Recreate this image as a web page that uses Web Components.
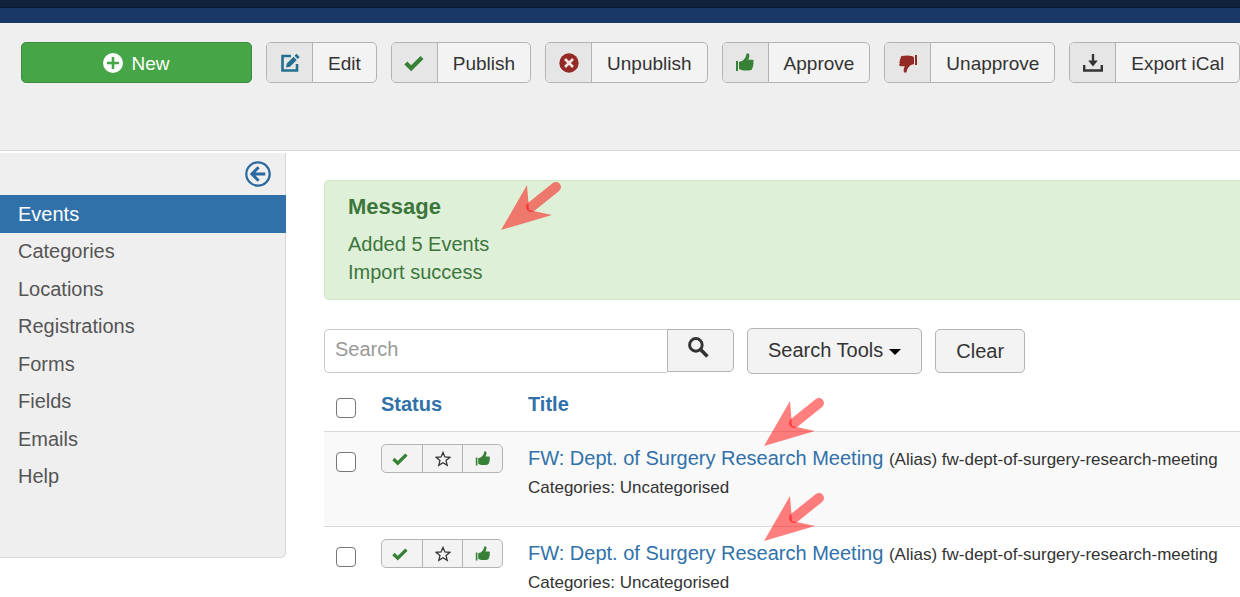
<!DOCTYPE html>
<html lang="en">
<head>
<meta charset="utf-8">
<meta name="viewport" content="width=device-width, initial-scale=1">
<title>Events</title>
<style>
  html, body { margin: 0; background: #fff; }
  body { font-family: "Liberation Sans", Arial, sans-serif; font-size: 20px; line-height: 28px; color: #333; }
</style>
</head>
<body>
<events-app></events-app>

<script>
const define = (name, html, setup) => {
  const template = document.createElement('template');
  template.innerHTML = html;
  customElements.define(name, class extends HTMLElement {
    constructor() {
      super();
      this.attachShadow({ mode: 'open' }).append(template.content.cloneNode(true));
    }
    connectedCallback() {
      if (setup && !this.ready) { this.ready = true; setup(this, this.shadowRoot); }
    }
  });
};

const THUMB = '<path fill="currentColor" d="M1 8h2v10H1zM4 9l3.600-1.200C9.500 6 10.500 4.500 11 3c.3-1.200.3-2.400 1.400-2.700 1.600-.2 2.200 1.500 1.900 3.200-.2 1.200-.7 2.300-1.100 3.300h4.200c1.700.2 1.700 2.100.6 2.600 1 .6.9 2.200-.2 2.600.8.800.5 2.200-.6 2.500.5.900 0 2.100-1 2.400-3 .9-7.200.9-9.700.2L4 16z"/>';
const ICONS = {
  plus: '<circle cx="10" cy="10" r="10" fill="currentColor"/><path d="M10 4v12M4 10h12" stroke="#46a546" stroke-width="2.600"/>',
  edit: '<path d="M11 3H2.500v14.500H17V11" fill="none" stroke="currentColor" stroke-width="2.600"/><path fill="currentColor" d="M6 14.500l.8-4L13.500 3.800l3.200 3.200-6.700 6.700zM14.500 2.800L16.500.8 19.700 4l-2 2z"/>',
  check: '<path d="M1.800 10l5.400 5.200L18 4.500" fill="none" stroke="currentColor" stroke-width="4.200"/>',
  cancel: '<circle cx="10" cy="10" r="9.700" fill="currentColor"/><path d="M6 6l8 8M14 6l-8 8" stroke="#f3e3e3" stroke-width="2.600"/>',
  up: THUMB,
  down: '<g transform="rotate(180 10 10)">' + THUMB + '</g>',
  download: '<path d="M1.200 12v5.500h17.600V12" fill="none" stroke="currentColor" stroke-width="2.400"/><path fill="currentColor" d="M8.800 1h2.400v6.500h3.600L10 13.500 5.200 7.500h3.600z"/>',
  star: '<path d="M10 1.800l2.400 5.700 6 .5-4.600 4 1.500 6-5.300-3.300L4.700 18l1.500-6-4.600-4 6-.5z" fill="none" stroke="currentColor" stroke-width="1.600"/>',
  search: '<circle cx="7.500" cy="7.500" r="6" fill="none" stroke="currentColor" stroke-width="2.800"/><path d="M12 12l6.500 6.500" stroke="currentColor" stroke-width="3.400"/>',
  back: '<circle cx="10" cy="10" r="9" fill="none" stroke="currentColor" stroke-width="1.700"/><path d="M10.500 4.800L5.300 10l5.200 5.200M5.600 10H15.600" fill="none" stroke="currentColor" stroke-width="2.300"/>'
};

define('ui-icon', `
<style>
  :host { display: block; flex: none; width: var(--icon-size, 20px); height: var(--icon-size, 20px); }
  svg { display: block; width: 100%; height: 100%; }
</style>
<svg viewBox="0 0 20 20" aria-hidden="true"></svg>`, (host, root) => {
  root.querySelector('svg').innerHTML = ICONS[host.getAttribute('name')];
});

define('pointer-arrow', `
<style>
  :host { display: block; position: absolute; width: 62px; height: 52px; pointer-events: none; }
  svg { display: block; }
</style>
<svg width="62" height="52" viewBox="0 0 62 52" aria-hidden="true">
  <path d="M1 50L27 5 29 30 52 35z" fill="#ff0000" fill-opacity=".5"/>
  <path d="M31 27L56 7" stroke="#ff0000" stroke-opacity=".5" stroke-width="10" stroke-linecap="round"/>
</svg>`);

define('tool-button', `
<style>
  :host { display: block; flex: none; }
  button { display: flex; align-items: stretch; height: 41px; padding: 0; font: inherit; font-size: 19px; color: #333;
    background: #f3f3f3; border: 1px solid #b3b3b3; border-radius: 5px; overflow: hidden; white-space: nowrap; }
  .icon { display: flex; align-items: center; justify-content: center; width: 45px; background: #e6e6e6;
    border-right: 1px solid #b3b3b3; color: var(--tone, #333); }
  .label { padding: 0 15px; align-self: center; padding-top: 2px; }
  :host([primary]) { width: 231px; }
  :host([primary]) button { width: 100%; justify-content: center; gap: 8px; color: #fff; background: #46a546; border-color: #3f8a41; }
  :host([primary]) .icon { width: auto; background: none; border: 0; color: #fff; }
  :host([primary]) .label { padding-left: 0; padding-right: 0; }
</style>
<button type="button"><span class="icon"><ui-icon></ui-icon></span><span class="label"><slot></slot></span></button>`, (host, root) => {
  const icon = document.createElement('ui-icon');
  icon.setAttribute('name', host.getAttribute('icon'));
  root.querySelector('.icon').replaceChildren(icon);
});

define('tool-bar', `
<style>
  :host { display: block; background: #efefef; border-bottom: 1px solid #d9d9d9; }
  .dark { height: 7px; background: #10223e; border-bottom: 1px solid #0b1a30; }
  .blue { height: 15px; background: #1a3867; }
  nav { display: flex; gap: 14px; padding: 19px 0 67px 21px; }
  @media (max-width: 1200px) { nav { flex-wrap: wrap; } }
</style>
<div class="dark"></div><div class="blue"></div>
<nav aria-label="Toolbar">
  <tool-button primary icon="plus">New</tool-button>
  <tool-button icon="edit" style="--tone:#24708f">Edit</tool-button>
  <tool-button icon="check" style="--tone:#378137">Publish</tool-button>
  <tool-button icon="cancel" style="--tone:#942a25">Unpublish</tool-button>
  <tool-button icon="up" style="--tone:#378137">Approve</tool-button>
  <tool-button icon="down" style="--tone:#942a25">Unapprove</tool-button>
  <tool-button icon="download">Export iCal</tool-button>
</nav>`);

define('side-menu', `
<style>
  :host { display: block; box-sizing: border-box; flex: none; width: 286px; background: #efefef;
    border: solid #d9d9d9; border-width: 0 1px 1px 0; border-radius: 0 0 5px 0; }
  .top { display: flex; justify-content: flex-end; padding: 8px 14px 8px 0; }
  button { padding: 0; border: 0; background: none; color: #2a69a0; --icon-size: 26px; }
  ul { list-style: none; margin: 0 -1px 0 0; padding: 0 0 62px; }
  nav { display: grid; }
  ul { display: grid; grid-auto-rows: 1fr; min-height: 300px; }
  a { display: flex; align-items: center; height: 100%; padding-left: 18px; color: #555; text-decoration: none; }
  a[aria-current] { background: #3071a9; color: #fff; }
</style>
<div class="top"><button type="button" aria-label="Toggle sidebar"><ui-icon name="back"></ui-icon></button></div>
<nav aria-label="Sidebar"><ul>
  <li><a href="#" aria-current="page">Events</a></li>
  <li><a href="#">Categories</a></li>
  <li><a href="#">Locations</a></li>
  <li><a href="#">Registrations</a></li>
  <li><a href="#">Forms</a></li>
  <li><a href="#">Fields</a></li>
  <li><a href="#">Emails</a></li>
  <li><a href="#">Help</a></li>
</ul></nav>`);

define('system-message', `
<style>
  :host { display: block; position: relative; padding: 12px 23px 13px; color: #3c763d; background: #dff0d8;
    border: solid #cfe6c3; border-width: 1px 0 1px 1px; border-radius: 5px 0 0 5px; }
  h4 { margin: 0 0 9px; font-size: 22px; line-height: 28px; }
  pointer-arrow { left: 175px; top: -1px; }
</style>
<h4>Message</h4>
<slot></slot>
<pointer-arrow></pointer-arrow>`);

define('search-tools', `
<style>
  :host { display: flex; align-items: center; gap: 13px; }
  form { display: flex; }
  input { box-sizing: border-box; width: 343px; height: 44px; padding: 0 10px 4px; font: inherit; color: #333; background: #fff;
    border: 1px solid #c9c9c9; border-right: 0; border-radius: 5px 0 0 5px; }
  input::placeholder { color: #999; opacity: 1; }
  button { box-sizing: border-box; height: 44px; padding: 0 20px; font: inherit; color: #333; background: #f3f3f3;
    border: 1px solid #b3b3b3; border-radius: 5px; white-space: nowrap; }
  form button { width: 67px; height: 43px; padding: 0 20px 6px; border-radius: 0 5px 5px 0; --icon-size: 21px; }
  .menu { display: flex; align-items: center; gap: 6px; height: 46px; padding-bottom: 3px; }
  .caret { margin-top: 4px; border: 6px solid transparent; border-top-color: #000; border-bottom: 0; }
</style>
<form>
  <input type="text" placeholder="Search" aria-label="Search">
  <button type="button" aria-label="Search"><ui-icon name="search"></ui-icon></button>
</form>
<button type="button" class="menu">Search Tools<span class="caret"></span></button>
<button type="button">Clear</button>`);

define('status-group', `
<style>
  :host { display: inline-flex; vertical-align: top; border: 1px solid #b3b3b3; border-radius: 5px; background: #f3f3f3; overflow: hidden; --icon-size: 16px; }
  button { display: flex; align-items: center; justify-content: center; box-sizing: border-box; width: 40px; height: 27px; padding: 0 4px 0 0;
    border: 0; background: none; color: #378137; }
  button + button { border-left: 1px solid #b3b3b3; padding: 0; }
  .star { color: #333; }
</style>
<button type="button" aria-label="Published"><ui-icon name="check"></ui-icon></button>
<button type="button" class="star" aria-label="Feature"><ui-icon name="star"></ui-icon></button>
<button type="button" aria-label="Approved"><ui-icon name="up"></ui-icon></button>`);

define('event-table', `
<style>
  :host { display: block; }
  table { width: 100%; border-collapse: collapse; }
  th, td { padding: 0; text-align: left; vertical-align: top; }
  th { height: 41px; padding-top: 16px; color: #3071a9; }
  th a { font-weight: bold; }
  td { height: 82px; padding-top: 12px; border-top: 1px solid #d9d9d9; white-space: nowrap; }
  .pick { width: 57px; }
  .state { width: 147px; }
  tbody tr:nth-child(odd) { background: #f9f9f9; }
  input { display: block; width: 20px; height: 20px; margin: 8px 0 0 12px; appearance: none; background: #fff; border: 1px solid #767676; border-radius: 4px; box-sizing: border-box; }
  input:checked { background: #3071a9; }
  a { color: #3071a9; text-decoration: none; }
  small { display: inline; font-size: 17px; }
  .cats { font-size: 17px; }
  .title { position: relative; }
  pointer-arrow { left: 235px; top: -36px; }
</style>
<table>
  <thead><tr>
    <th class="pick"><input type="checkbox" aria-label="Check all"></th>
    <th class="state"><a href="#">Status</a></th>
    <th><a href="#">Title</a></th>
  </tr></thead>
  <tbody></tbody>
</table>`, (host, root) => {
  const row = n => `<tr>
    <td class="pick"><input type="checkbox" aria-label="Select event ${n}"></td>
    <td class="state"><status-group></status-group></td>
    <td class="title"><div><a href="#">FW: Dept. of Surgery Research Meeting</a> <small>(Alias) fw-dept-of-surgery-research-meeting</small></div>
      <div class="cats">Categories: Uncategorised</div><pointer-arrow></pointer-arrow></td>
  </tr>`;
  root.querySelector('tbody').innerHTML = row(1) + row(2);
});

define('events-app', `
<style>
  :host { display: block; overflow: hidden; }
  .body { display: flex; align-items: flex-start; gap: 38px; padding-top: 2px; }
  main { flex: 1; min-width: 0; padding-top: 27px; }
  search-tools { margin-top: 28px; }
</style>
<tool-bar></tool-bar>
<div class="body">
  <side-menu></side-menu>
  <main>
    <system-message><div>Added 5 Events</div><div>Import success</div></system-message>
    <search-tools></search-tools>
    <event-table></event-table>
  </main>
</div>`);
</script>
</body>
</html>
